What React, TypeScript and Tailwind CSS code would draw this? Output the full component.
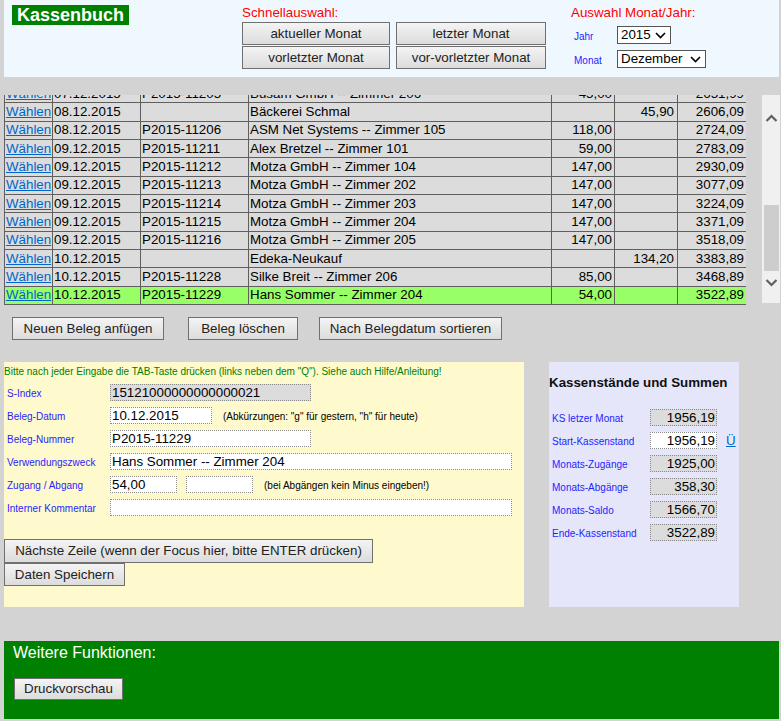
import React from 'react';

interface Buchung {
    datum: string;
    nummer: string;
    zweck: string;
    zugang: string;
    abgang: string;
    saldo: string;
    aktiv?: boolean;
}

const buchungen: Buchung[] = [
    { datum: '07.12.2015', nummer: 'P2015-11205', zweck: 'Busam GmbH -- Zimmer 206', zugang: '45,00', abgang: '', saldo: '2651,99' },
    { datum: '08.12.2015', nummer: '', zweck: 'Bäckerei Schmal', zugang: '', abgang: '45,90', saldo: '2606,09' },
    { datum: '08.12.2015', nummer: 'P2015-11206', zweck: 'ASM Net Systems -- Zimmer 105', zugang: '118,00', abgang: '', saldo: '2724,09' },
    { datum: '09.12.2015', nummer: 'P2015-11211', zweck: 'Alex Bretzel -- Zimmer 101', zugang: '59,00', abgang: '', saldo: '2783,09' },
    { datum: '09.12.2015', nummer: 'P2015-11212', zweck: 'Motza GmbH -- Zimmer 104', zugang: '147,00', abgang: '', saldo: '2930,09' },
    { datum: '09.12.2015', nummer: 'P2015-11213', zweck: 'Motza GmbH -- Zimmer 202', zugang: '147,00', abgang: '', saldo: '3077,09' },
    { datum: '09.12.2015', nummer: 'P2015-11214', zweck: 'Motza GmbH -- Zimmer 203', zugang: '147,00', abgang: '', saldo: '3224,09' },
    { datum: '09.12.2015', nummer: 'P2015-11215', zweck: 'Motza GmbH -- Zimmer 204', zugang: '147,00', abgang: '', saldo: '3371,09' },
    { datum: '09.12.2015', nummer: 'P2015-11216', zweck: 'Motza GmbH -- Zimmer 205', zugang: '147,00', abgang: '', saldo: '3518,09' },
    { datum: '10.12.2015', nummer: '', zweck: 'Edeka-Neukauf', zugang: '', abgang: '134,20', saldo: '3383,89' },
    { datum: '10.12.2015', nummer: 'P2015-11228', zweck: 'Silke Breit -- Zimmer 206', zugang: '85,00', abgang: '', saldo: '3468,89' },
    { datum: '10.12.2015', nummer: 'P2015-11229', zweck: 'Hans Sommer -- Zimmer 204', zugang: '54,00', abgang: '', saldo: '3522,89', aktiv: true },
];

const summen = [
    { label: 'KS letzer Monat', wert: '1956,19' },
    { label: 'Start-Kassenstand', wert: '1956,19', editierbar: true },
    { label: 'Monats-Zugänge', wert: '1925,00' },
    { label: 'Monats-Abgänge', wert: '358,30' },
    { label: 'Monats-Saldo', wert: '1566,70' },
    { label: 'Ende-Kassenstand', wert: '3522,89' },
];

function Knopf({ children, className = '' }: { children: React.ReactNode; className?: string }) {
    return (
        <button
            type="button"
            className={`border border-[#707070] bg-gradient-to-b from-[#f4f4f4] to-[#dcdcdc] text-[13.33px] leading-none text-[#222] ${className}`}
        >
            {children}
        </button>
    );
}

function Auswahl({ wert, className = '' }: { wert: string; className?: string }) {
    return (
        <div className={`flex h-[18px] items-center justify-between border border-[#555] bg-white pl-[3px] pr-[4px] text-[13.33px] leading-[16px] text-black ${className}`}>
            <span>{wert}</span>
            <svg width="11" height="7" viewBox="0 0 11 7">
                <path d="M1 1l4.5 4.5L10 1" stroke="#000" strokeWidth="1.6" fill="none" />
            </svg>
        </div>
    );
}

function Feld({ wert = '', grau = false, className = '' }: { wert?: string; grau?: boolean; className?: string }) {
    return (
        <div
            className={`h-[17px] border border-dotted border-[#8a8a8a] pl-[1px] text-[13.33px] leading-[15px] text-black ${grau ? 'bg-[#dcdcdc]' : 'bg-white'} ${className}`}
        >
            {wert}
        </div>
    );
}

function FormZeile({ label, children }: { label: string; children: React.ReactNode }) {
    return (
        <div className="mt-[6px] flex h-[17px] items-center">
            <div className="w-[106px] pl-[3px] pt-[3px] text-[10px] leading-[12px] text-[#1f1fff]">{label}</div>
            {children}
        </div>
    );
}

export default function App() {
    const zelle = 'border border-[#5f5f5f] px-[1px] py-0 whitespace-nowrap leading-[16px]';

    return (
        <div className="min-h-screen bg-[#d3d3d3] pb-[2px] font-['Liberation_Sans',Arial,sans-serif]">
            {/* Kopfbereich */}
            <header className="ml-1 mr-[2px] flex h-[77px] bg-[#f0f8ff]">
                <div className="w-[238px] pl-2 pt-1">
                    <div className="inline-block h-5 bg-[#008000] px-[5px] text-[18px] font-bold leading-5 text-white">Kassenbuch</div>
                </div>
                <div className="pt-[5px]">
                    <div className="text-[13.33px] leading-[16px] text-[#ff0000]">Schnellauswahl:</div>
                    <div className="mt-[1px] grid grid-cols-[148px_150px] gap-x-[6px] gap-y-[1px]">
                        <Knopf className="h-[23px]">aktueller Monat</Knopf>
                        <Knopf className="h-[23px]">letzter Monat</Knopf>
                        <Knopf className="h-[23px]">vorletzter Monat</Knopf>
                        <Knopf className="h-[23px]">vor-vorletzter Monat</Knopf>
                    </div>
                </div>
                <div className="ml-[25px] pt-[5px]">
                    <div className="text-[13.33px] leading-[16px] text-[#ff0000]">Auswahl Monat/Jahr:</div>
                    <div className="mt-[5px] flex h-[18px] items-center">
                        <div className="w-[46px] pl-[3px] pt-[4px] text-[10px] leading-[12px] text-[#1f1fff]">Jahr</div>
                        <Auswahl wert="2015" className="w-[54px]" />
                    </div>
                    <div className="mt-[6px] flex h-[18px] items-center">
                        <div className="w-[46px] pl-[3px] pt-[4px] text-[10px] leading-[12px] text-[#1f1fff]">Monat</div>
                        <Auswahl wert="Dezember" className="w-[89px]" />
                    </div>
                </div>
            </header>

            {/* Buchungsliste */}
            <div className="ml-1 mt-[18px] flex h-[210px]">
                <div className="flex w-[742px] flex-col justify-end overflow-hidden">
                    <table className="w-[742px] shrink-0 table-fixed border-collapse text-[13.33px] leading-[16px] text-black">
                        <colgroup>
                            <col className="w-[48px]" />
                            <col className="w-[88px]" />
                            <col className="w-[108px]" />
                            <col className="w-[303px]" />
                            <col className="w-[63px]" />
                            <col className="w-[63px]" />
                            <col className="w-[69px]" />
                        </colgroup>
                        <tbody>
                            {buchungen.map((b, i) => (
                                <tr key={i} className={`h-[18.33px] ${b.aktiv ? 'bg-[#99ff66]' : 'bg-[#dcdcdc]'}`}>
                                    <td className={zelle}>
                                        <a href="#" className="text-[#0066cc] underline">
                                            Wählen
                                        </a>
                                    </td>
                                    <td className={zelle}>{b.datum}</td>
                                    <td className={zelle}>{b.nummer}</td>
                                    <td className={zelle}>{b.zweck}</td>
                                    <td className={`${zelle} pr-[2px] text-right`}>{b.zugang}</td>
                                    <td className={`${zelle} pr-[3px] text-right`}>{b.abgang}</td>
                                    <td className={`${zelle} pr-[2px] text-right`}>{b.saldo}</td>
                                </tr>
                            ))}
                        </tbody>
                    </table>
                </div>
                {/* Scrollleiste */}
                <div className="ml-4 flex h-[208px] w-[18px] flex-col items-center bg-[#f0f0f0]">
                    <svg className="mt-[19px]" width="13" height="8" viewBox="0 0 13 8">
                        <path d="M1.5 7l5-5 5 5" stroke="#606060" strokeWidth="2.2" fill="none" />
                    </svg>
                    <div className="mt-[83px] h-[66px] w-[15px] bg-[#cdcdcd]" />
                    <svg className="mt-[8px]" width="13" height="8" viewBox="0 0 13 8">
                        <path d="M1.5 1l5 5 5-5" stroke="#606060" strokeWidth="2.2" fill="none" />
                    </svg>
                </div>
            </div>

            {/* Aktionen */}
            <div className="ml-3 mt-[12px] flex">
                <Knopf className="h-[23px] w-[152px]">Neuen Beleg anfügen</Knopf>
                <Knopf className="ml-6 h-[23px] w-[110px]">Beleg löschen</Knopf>
                <Knopf className="ml-[21px] h-[23px] w-[183px]">Nach Belegdatum sortieren</Knopf>
            </div>

            <div className="mt-[22px] flex">
                {/* Eingabeformular */}
                <div className="ml-1 h-[245px] w-[520px] bg-[#fffacd]">
                    <div className="pt-[4px] text-[10px] leading-[12px] text-[#008000]">
                        Bitte nach jeder Eingabe die TAB-Taste drücken (links neben dem "Q"). Siehe auch Hilfe/Anleitung!
                    </div>
                    <div className="mt-[1px]">
                        <FormZeile label="S-Index">
                            <Feld wert="15121000000000000021" grau className="w-[201px]" />
                        </FormZeile>
                        <FormZeile label="Beleg-Datum">
                            <Feld wert="10.12.2015" className="w-[102px]" />
                            <span className="ml-[11px] pt-[2px] text-[10px] leading-[12px] text-black">(Abkürzungen: "g" für gestern, "h" für heute)</span>
                        </FormZeile>
                        <FormZeile label="Beleg-Nummer">
                            <Feld wert="P2015-11229" className="w-[201px]" />
                        </FormZeile>
                        <FormZeile label="Verwendungszweck">
                            <Feld wert="Hans Sommer -- Zimmer 204" className="w-[402px]" />
                        </FormZeile>
                        <FormZeile label="Zugang / Abgang">
                            <Feld wert="54,00" className="w-[67px]" />
                            <Feld className="ml-[9px] w-[67px]" />
                            <span className="ml-[11px] pt-[2px] text-[10px] leading-[12px] text-black">(bei Abgängen kein Minus eingeben!)</span>
                        </FormZeile>
                        <FormZeile label="Interner Kommentar">
                            <Feld className="w-[402px]" />
                        </FormZeile>
                    </div>
                    <div className="mt-[23px] flex flex-col items-start">
                        <Knopf className="h-[24px] w-[369px]">Nächste Zeile (wenn der Focus hier, bitte ENTER drücken)</Knopf>
                        <Knopf className="h-[23px] w-[121px]">Daten Speichern</Knopf>
                    </div>
                </div>

                {/* Kassenstände */}
                <div className="ml-[25px] h-[245px] w-[190px] bg-[#e6e6fa]">
                    <div className="pt-[13px] text-[13.33px] font-bold leading-[16px] text-[#111]">Kassenstände und Summen</div>
                    <div className="mt-[18px]">
                        {summen.map((s) => (
                            <div key={s.label} className="mt-[6px] flex h-[17px] items-center">
                                <div className="w-[101px] pl-[3px] pt-[2px] text-[10px] leading-[12px] text-[#1f1fff]">{s.label}</div>
                                <div
                                    className={`h-[17px] w-[67px] border border-dotted border-[#8a8a8a] pr-[1px] text-right text-[13.33px] leading-[15px] text-black ${s.editierbar ? 'bg-white' : 'bg-[#dcdcdc]'}`}
                                >
                                    {s.wert}
                                </div>
                                {s.editierbar && (
                                    <a href="#" className="ml-[9px] text-[13.33px] leading-[16px] text-[#0066cc] underline">
                                        Ü
                                    </a>
                                )}
                            </div>
                        ))}
                    </div>
                </div>
            </div>

            {/* Weitere Funktionen */}
            <footer className="ml-1 mr-[2px] mt-[34px] h-[78px] bg-[#008000]">
                <div className="pl-[9px] pt-[3px] text-[16px] leading-[18px] text-white">Weitere Funktionen:</div>
                <Knopf className="ml-[10px] mt-[16px] h-[22px] w-[109px]">Druckvorschau</Knopf>
            </footer>
        </div>
    );
}
